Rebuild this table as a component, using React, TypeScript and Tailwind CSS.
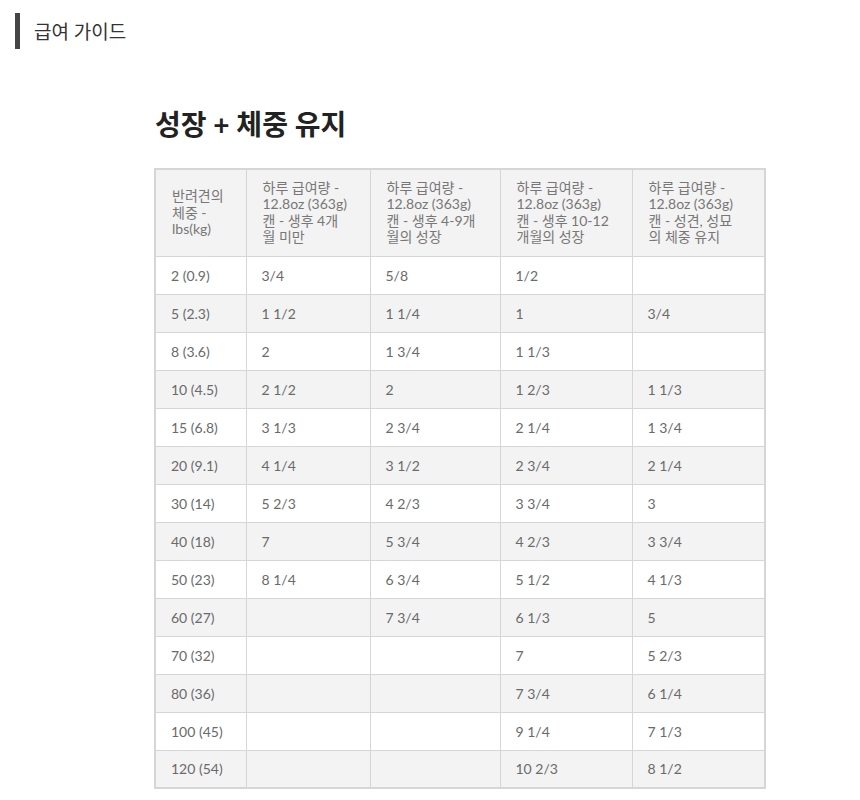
import React from "react";

const headers = [
  "반려견의 체중 - lbs(kg)",
  "하루 급여량 - 12.8oz (363g) 캔 - 생후 4개월 미만",
  "하루 급여량 - 12.8oz (363g) 캔 - 생후 4-9개월의 성장",
  "하루 급여량 - 12.8oz (363g) 캔 - 생후 10-12 개월의 성장",
  "하루 급여량 - 12.8oz (363g) 캔 - 성견, 성묘의 체중 유지",
];

const rows: string[][] = [
  ["2 (0.9)", "3/4", "5/8", "1/2", ""],
  ["5 (2.3)", "1 1/2", "1 1/4", "1", "3/4"],
  ["8 (3.6)", "2", "1 3/4", "1 1/3", ""],
  ["10 (4.5)", "2 1/2", "2", "1 2/3", "1 1/3"],
  ["15 (6.8)", "3 1/3", "2 3/4", "2 1/4", "1 3/4"],
  ["20 (9.1)", "4 1/4", "3 1/2", "2 3/4", "2 1/4"],
  ["30 (14)", "5 2/3", "4 2/3", "3 3/4", "3"],
  ["40 (18)", "7", "5 3/4", "4 2/3", "3 3/4"],
  ["50 (23)", "8 1/4", "6 3/4", "5 1/2", "4 1/3"],
  ["60 (27)", "", "7 3/4", "6 1/3", "5"],
  ["70 (32)", "", "", "7", "5 2/3"],
  ["80 (36)", "", "", "7 3/4", "6 1/4"],
  ["100 (45)", "", "", "9 1/4", "7 1/3"],
  ["120 (54)", "", "", "10 2/3", "8 1/2"],
];

const headCls = [
  "w-[91px] pr-[14px]",
  "w-[124px] pr-[20px]",
  "w-[130px] pr-[14px]",
  "w-[132px] pr-[18px]",
  "w-[133px] pr-[26px]",
];

export default function App() {
  return (
    <div
      className="w-[860px] h-[800px] bg-white overflow-hidden"
      style={{ fontFamily: "Lato, 'Noto Sans CJK KR', sans-serif" }}
    >
      <div className="flex items-center pt-[13px] pl-[15px]">
        <div className="w-[5px] h-[36px] bg-[#444444]" />
        <div className="ml-[14px] text-[19px] text-[#333333] leading-none">급여 가이드</div>
      </div>
      <div className="pl-[155px] pt-[57px]">
        <h2 className="text-[28px] font-bold text-[#222222] leading-[36px]">성장 + 체중 유지</h2>
      </div>
      <div className="pl-[154px] pt-[26px]">
        <table className="w-[610px] border-collapse border-2 border-[#d6d6d6] table-fixed">
          <thead>
            <tr className="bg-[#f3f3f3] h-[87px]">
              {headers.map((h, i) => (
                <th
                  key={i}
                  className={`${headCls[i]} border border-[#d6d6d6] align-middle text-left font-normal text-[14px] leading-[16.5px] text-[#777777] pl-[16px] py-[8px]`}
                >
                  {h}
                </th>
              ))}
            </tr>
          </thead>
          <tbody>
            {rows.map((r, ri) => (
              <tr key={ri} className={`h-[38px] ${ri % 2 === 1 ? "bg-[#f3f3f3]" : "bg-white"}`}>
                {r.map((c, ci) => (
                  <td
                    key={ci}
                    className="border border-[#d6d6d6] text-[14px] text-[#6a6a6a] pl-[15px] py-0 align-middle"
                  >
                    {c}
                  </td>
                ))}
              </tr>
            ))}
          </tbody>
        </table>
      </div>
    </div>
  );
}
